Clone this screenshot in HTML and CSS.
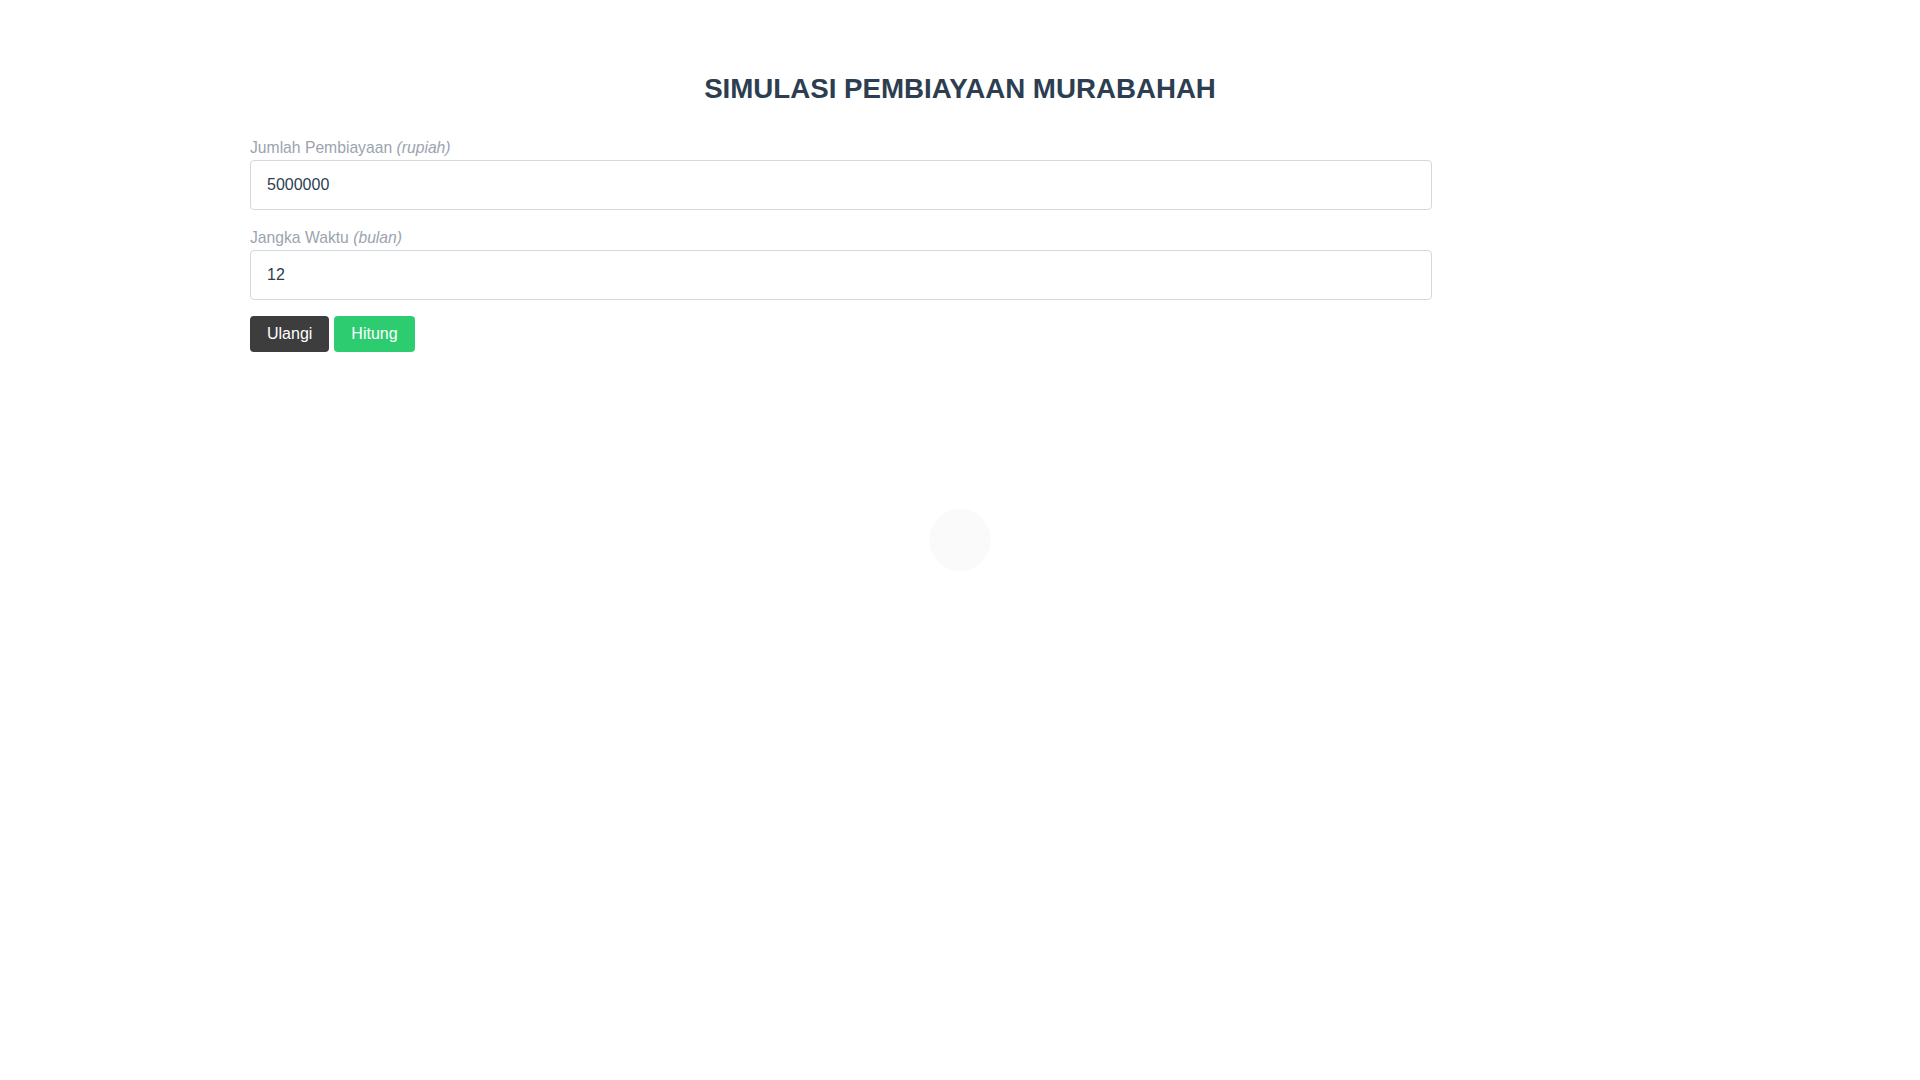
FILE: index.html
```html
<!DOCTYPE html>
<html lang="id">
<head>
<meta charset="utf-8">
<title>Simulasi Pembiayaan Murabahah</title>
<link rel="stylesheet" href="styles.css">
</head>
<body>
<main class="page">
  <h1 class="title">SIMULASI PEMBIAYAAN MURABAHAH</h1>
  <form class="form">
    <div class="field">
      <label class="label" for="jumlah">Jumlah Pembiayaan <em>(rupiah)</em></label>
      <input class="input" id="jumlah" type="text" value="5000000">
    </div>
    <div class="field">
      <label class="label" for="jangka">Jangka Waktu <em>(bulan)</em></label>
      <input class="input" id="jangka" type="text" value="12">
    </div>
    <div class="actions">
      <button type="button" class="btn btn-dark">Ulangi</button>
      <button type="button" class="btn btn-green">Hitung</button>
    </div>
  </form>
</main>
<div class="loader"></div>
</body>
</html>
```

FILE: styles.css
```css
html, body {
  margin: 0;
  padding: 0;
  background: #ffffff;
}
body {
  font-family: "Liberation Sans", Arial, sans-serif;
  font-size: 16px;
  color: #2c3e50;
}
.page {
  padding-top: 71px;
}
.title {
  margin: 0;
  text-align: center;
  font-size: 27.7px;
  line-height: 36px;
  font-weight: 700;
  color: #2c3e50;
}
.form {
  margin: 29px 0 0 250px;
  width: 1182px;
  display: flex;
  flex-direction: column;
  gap: 16px;
}
.field {
  display: flex;
  flex-direction: column;
}
.label {
  font-size: 15.7px;
  line-height: 24px;
  color: #9ca3af;
}
.label em {
  font-style: italic;
}
.input {
  box-sizing: border-box;
  height: 50px;
  width: 100%;
  padding: 0 16px;
  border: 1px solid #d4d8de;
  border-radius: 4px;
  font-family: "Liberation Sans", Arial, sans-serif;
  font-size: 16px;
  color: #2c3e50;
  background: #ffffff;
  outline: none;
}
.actions {
  display: flex;
  gap: 5px;
}
.btn {
  box-sizing: border-box;
  height: 36px;
  padding: 0 17px;
  border: none;
  border-radius: 4px;
  font-family: "Liberation Sans", Arial, sans-serif;
  font-size: 16px;
  line-height: 36px;
  color: #ffffff;
  cursor: pointer;
}
.btn-dark {
  background: #3d3d3d;
}
.btn-green {
  background: #2ecc71;
}
.loader {
  position: fixed;
  left: 929px;
  top: 509px;
  width: 62px;
  height: 62px;
  border-radius: 50%;
  background: #fafafa;
}
```
